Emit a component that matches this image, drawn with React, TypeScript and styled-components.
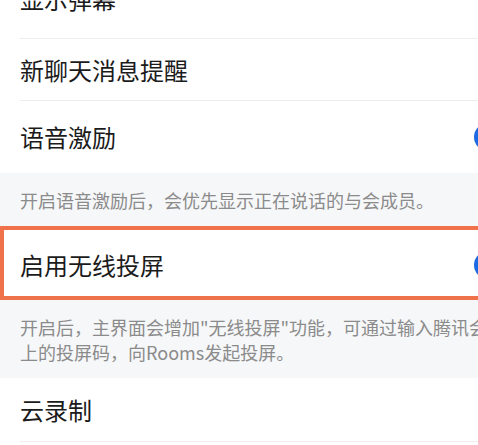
import React from 'react';
import styled, {createGlobalStyle} from 'styled-components';

const GlobalStyle = createGlobalStyle`
  html, body {
    margin: 0;
    padding: 0;
    background: #ffffff;
    overflow: hidden;
  }
  body {
    font-family: "Noto Sans CJK SC", "Noto Sans", sans-serif;
    -webkit-font-smoothing: antialiased;
  }
`;

const Screen = styled.div`
  width: 540px;
  height: 445px;
  overflow: hidden;
  display: flex;
  flex-direction: column;
  background: #ffffff;
`;

const List = styled.div`
  display: flex;
  flex-direction: column;
  margin-top: -42px;
`;

const Row = styled.div<{$height: number; $divider?: boolean; $highlight?: boolean}>`
  box-sizing: border-box;
  display: flex;
  flex-direction: row;
  align-items: center;
  justify-content: space-between;
  height: ${(p) => p.$height}px;
  padding: 0 14px 0 20px;
  background: #ffffff;
  position: relative;
  border: ${(p) => (p.$highlight ? '4px solid #f0724a' : 'none')};
  ${(p) => p.$highlight && 'padding: 4px 10px 0 16px;'}
  ${(p) =>
    p.$divider &&
    `
    &::after {
      content: '';
      position: absolute;
      left: 20px;
      right: 0;
      bottom: 0;
      height: 1px;
      background: #ededed;
    }
  `}
`;

const Title = styled.span`
  font-size: 24px;
  line-height: 30px;
  color: #1b1b1b;
  font-weight: 400;
`;

const Toggle = styled.div<{$on?: boolean}>`
  width: 52px;
  height: 28px;
  border-radius: 14px;
  background: ${(p) => (p.$on ? '#1b6ae4' : '#dcdcdc')};
  display: flex;
  align-items: center;
  justify-content: ${(p) => (p.$on ? 'flex-end' : 'flex-start')};
  padding: 2px;
  box-sizing: border-box;
  flex-shrink: 0;
`;

const Knob = styled.div`
  width: 24px;
  height: 24px;
  border-radius: 50%;
  background: #ffffff;
`;

const Note = styled.div`
  background: #f6f7f9;
  padding: 15px 20px 13px 20px;
  font-size: 18px;
  line-height: 25px;
  color: #8b8b8b;
  white-space: nowrap;
`;

type SettingProps = {
  title: string;
  height: number;
  divider?: boolean;
  toggle?: boolean;
  highlight?: boolean;
};

function Setting({title, height, divider, toggle, highlight}: SettingProps) {
  return (
    <Row $height={height} $divider={divider} $highlight={highlight}>
      <Title>{title}</Title>
      {toggle && (
        <Toggle $on>
          <Knob />
        </Toggle>
      )}
    </Row>
  );
}

export default function App() {
  return (
    <>
      <GlobalStyle />
      <Screen>
        <List>
          <Setting title="显示弹幕" height={81} divider />
          <Setting title="新聊天消息提醒" height={62} divider />
          <Setting title="语音激励" height={72} toggle />
          <Note>开启语音激励后，会优先显示正在说话的与会成员。</Note>
          <Setting title="启用无线投屏" height={74} toggle highlight />
          <Note>
            开启后，主界面会增加"无线投屏"功能，可通过输入腾讯会议Rooms
            <br />
            上的投屏码，向Rooms发起投屏。
          </Note>
          <Setting title="云录制" height={64} divider />
        </List>
      </Screen>
    </>
  );
}
